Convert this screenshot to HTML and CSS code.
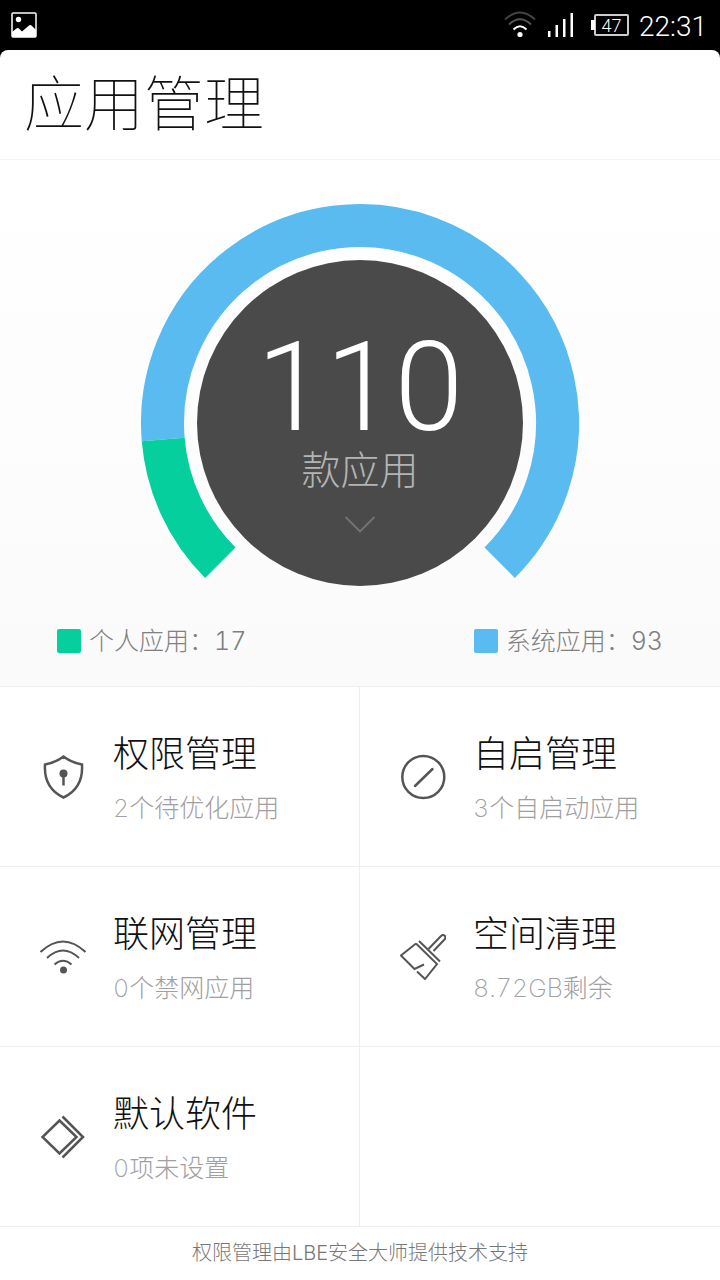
FILE: index.html
```html
<!DOCTYPE html>
<html lang="zh-CN">
<head>
  <meta charset="UTF-8">
  <meta name="viewport" content="width=device-width, initial-scale=1">
  <title>应用管理</title>
  <link rel="stylesheet" href="styles.css">
</head>
<body>
  <div class="status-bar">
    <svg class="status-photo" width="26" height="26" viewBox="0 0 26 26">
      <rect x="1" y="1" width="24" height="24" rx="1" fill="none" stroke="#fff" stroke-width="1.5"/>
      <circle cx="7.500" cy="7.500" r="2.700" fill="#fff"/>
      <path d="M1 20 L5.500 16.500 Q7 15.500 8.500 17 L11 19.500 L18 13.500 Q19.500 12.500 21 14 L25 18 V25 H1 Z" fill="#fff"/>
    </svg>
    <svg width="32" height="28" viewBox="0 0 32 28" fill="none" stroke-width="1.800">
      <path d="M1 8.500 Q16 -5.500 31 8.500" stroke="#444"/>
      <path d="M5 13.500 Q16 3 27 13.500" stroke="#555"/>
      <path d="M9.500 18.500 Q16 12 22.500 18.500" stroke="#fff" stroke-width="2"/>
      <circle cx="16" cy="23.500" r="2.600" fill="#fff"/>
    </svg>
    <svg class="status-signal" width="26" height="26" viewBox="0 0 26 26" fill="#fff">
      <path d="M0 19 h2.500 v6 h-2.500z M7.500 13 h2.500 v12 h-2.500z M15 7 h2.500 v18 h-2.500z M22.500 1 h2.500 v24 h-2.500z"/>
    </svg>
    <span class="battery">47</span>
    <span class="clock">22:31</span>
  </div>

  <div class="screen">
    <header class="title-bar">
      <h1>应用管理</h1>
    </header>

    <section class="overview">
      <div class="gauge">
        <svg class="gauge-ring" viewBox="0 0 438 438" fill="none" stroke-width="43">
          <path d="M22.200 235.500 A197.500 197.500 0 1 1 358.700 358.700" stroke="#59bbf0"/>
          <path d="M79.300 358.700 A197.500 197.500 0 0 1 22.200 235.500" stroke="#05cf9c"/>
        </svg>
        <button class="gauge-core" type="button">
          <span class="gauge-count">110</span>
          <span class="gauge-label">款应用</span>
          <svg width="30" height="17" viewBox="0 0 30 17" fill="none" stroke="#767676" stroke-width="1.800">
            <path d="M0.500 1 L15 15.500 L29.500 1"/>
          </svg>
        </button>
      </div>
      <div class="legend">
        <span class="legend-item personal">个人应用：17</span>
        <span class="legend-item system">系统应用：93</span>
      </div>
    </section>

    <nav class="grid">
      <a class="card" href="#permission">
        <svg class="icon" viewBox="0 0 46 46">
          <path d="M23.500 2.500 Q31 8.500 42 10.500 Q43.500 34 23.500 43.500 Q3.500 34 5 10.500 Q16 8.500 23.500 2.500 Z"/>
          <circle class="dot" cx="23.500" cy="19.500" r="4"/>
          <path d="M23.500 20 V31.500"/>
        </svg>
        <div class="card-text">
          <h2>权限管理</h2>
          <p>2个待优化应用</p>
        </div>
      </a>
      <a class="card" href="#autostart">
        <svg class="icon" viewBox="0 0 46 46">
          <circle cx="23.300" cy="23" r="21"/>
          <path d="M15 32 L32.500 15" stroke-linecap="round"/>
        </svg>
        <div class="card-text">
          <h2>自启管理</h2>
          <p>3个自启动应用</p>
        </div>
      </a>
      <a class="card" href="#network">
        <svg class="icon thin" viewBox="0 0 46 46">
          <path d="M0.500 18 Q23 -3 45.500 18"/>
          <path d="M7 24 Q23 9 39 24"/>
          <path d="M14.500 30.500 Q23 23 31.500 30.500"/>
          <circle class="dot" cx="23.500" cy="36" r="3.500"/>
        </svg>
        <div class="card-text">
          <h2>联网管理</h2>
          <p>0个禁网应用</p>
        </div>
      </a>
      <a class="card" href="#clean">
        <svg class="icon thin" viewBox="0 0 46 46">
          <path d="M16 9.500 L1 21.500 L14.500 35 L24 30.500"/>
          <path d="M16 9.500 L37 30 L25 45 L17 37.500"/>
          <path d="M19 7 L40 27.500"/>
          <path d="M28.500 15 L41 2 Q43 0 45 2 Q46 4 44.500 5.500 L33.500 17"/>
        </svg>
        <div class="card-text">
          <h2>空间清理</h2>
          <p>8.72GB剩余</p>
        </div>
      </a>
      <a class="card" href="#default">
        <svg class="icon" viewBox="0 0 46 46">
          <path d="M19.500 6.500 L36.500 23 L19.500 39.500 L2.500 23 Z"/>
          <path d="M22.500 2.500 L43 23 L22.500 43.500"/>
        </svg>
        <div class="card-text">
          <h2>默认软件</h2>
          <p>0项未设置</p>
        </div>
      </a>
      <div class="card"></div>
    </nav>

    <footer class="footer">权限管理由LBE安全大师提供技术支持</footer>
  </div>
</body>
</html>
```

FILE: styles.css
```css
* {
  box-sizing: border-box;
}
body {
  margin: 0;
  background: #000;
  font-family: Inter, 'Noto Sans CJK SC', sans-serif;
  font-weight: 300;
  color: #111;
}
h1, h2, p {
  margin: 0;
}

/* status bar */
.status-bar {
  display: flex;
  align-items: center;
  height: 50px;
  padding: 0 13px 0 11px;
  font-family: Roboto, sans-serif;
  color: #fff;
}
.status-photo {
  margin-right: auto;
}
.status-signal {
  margin: 0 20px 0 12px;
}
.battery {
  position: relative;
  width: 35px;
  height: 22px;
  margin-right: 10px;
  border: 2px solid #ccc;
  border-radius: 2px;
  font-size: 18px;
  line-height: 19px;
  text-align: center;
}
.battery::before {
  content: "";
  position: absolute;
  left: -5px;
  top: 4px;
  width: 4px;
  height: 10px;
  background: #fff;
}
.clock {
  padding-top: 2px;
  font-size: 28px;
}

/* page */
.screen {
  background: #fff;
  border-radius: 8px 8px 0 0;
}
.title-bar {
  height: 110px;
  padding: 0 24px;
  border-bottom: 1px solid #f4f4f4;
}
.title-bar h1 {
  font-size: 60px;
  line-height: 108px;
  font-weight: 100;
}

/* gauge */
.overview {
  padding: 44px 57px 26px;
  background: linear-gradient(#fff, #fafafa);
  border-bottom: 1px solid #eee;
}
.gauge {
  display: grid;
  place-items: center;
  width: 438px;
  height: 438px;
  margin: 0 auto;
}
.gauge-ring, .gauge-core {
  grid-area: 1 / 1;
}
.gauge-ring {
  width: 100%;
  height: 100%;
}
.gauge-core {
  display: flex;
  flex-direction: column;
  align-items: center;
  width: 326px;
  height: 326px;
  padding: 70px 0 0;
  border: none;
  border-radius: 50%;
  background: #4a4a4a;
  font-family: Roboto, 'Noto Sans CJK SC', sans-serif;
  font-weight: 300;
  cursor: pointer;
}
.gauge-count {
  font-size: 124px;
  line-height: 116px;
  font-weight: 300;
  color: #fff;
}
.gauge-label {
  margin-bottom: 20px;
  font-size: 39px;
  line-height: 50px;
  color: #b4b4b4;
}
.legend {
  display: flex;
  justify-content: space-between;
  margin-top: -20px;
}
.legend-item {
  display: flex;
  align-items: center;
  gap: 8px;
  font-size: 25px;
  line-height: 38px;
  font-variant-numeric: tabular-nums;
  color: #808080;
}
.legend-item::before {
  content: "";
  width: 24px;
  height: 24px;
  border-radius: 2px;
}
.personal::before {
  background: #05cf9c;
}
.system::before {
  background: #59bbf0;
}

/* menu */
.grid {
  display: grid;
  grid-template-columns: 1fr 1fr;
}
.card {
  display: flex;
  align-items: center;
  gap: 27px;
  height: 180px;
  padding-left: 40px;
  border-bottom: 1px solid #eee;
  color: inherit;
  text-decoration: none;
}
.card:nth-child(odd) {
  border-right: 1px solid #eee;
}
.icon {
  width: 46px;
  height: 46px;
  fill: none;
  stroke: #555;
  stroke-width: 2.5;
}
.icon.thin {
  stroke-width: 2;
}
.icon .dot {
  fill: #555;
  stroke: none;
}
.card-text {
  padding-top: 8px;
}
.card h2 {
  font-size: 36px;
  line-height: 54px;
  font-weight: 300;
}
.card p {
  font-size: 25px;
  line-height: 54px;
  font-weight: 200;
  font-variant-numeric: tabular-nums;
  color: #a0a0a0;
}
.footer {
  font-size: 20px;
  line-height: 53px;
  text-align: center;
  color: #777;
}
```
